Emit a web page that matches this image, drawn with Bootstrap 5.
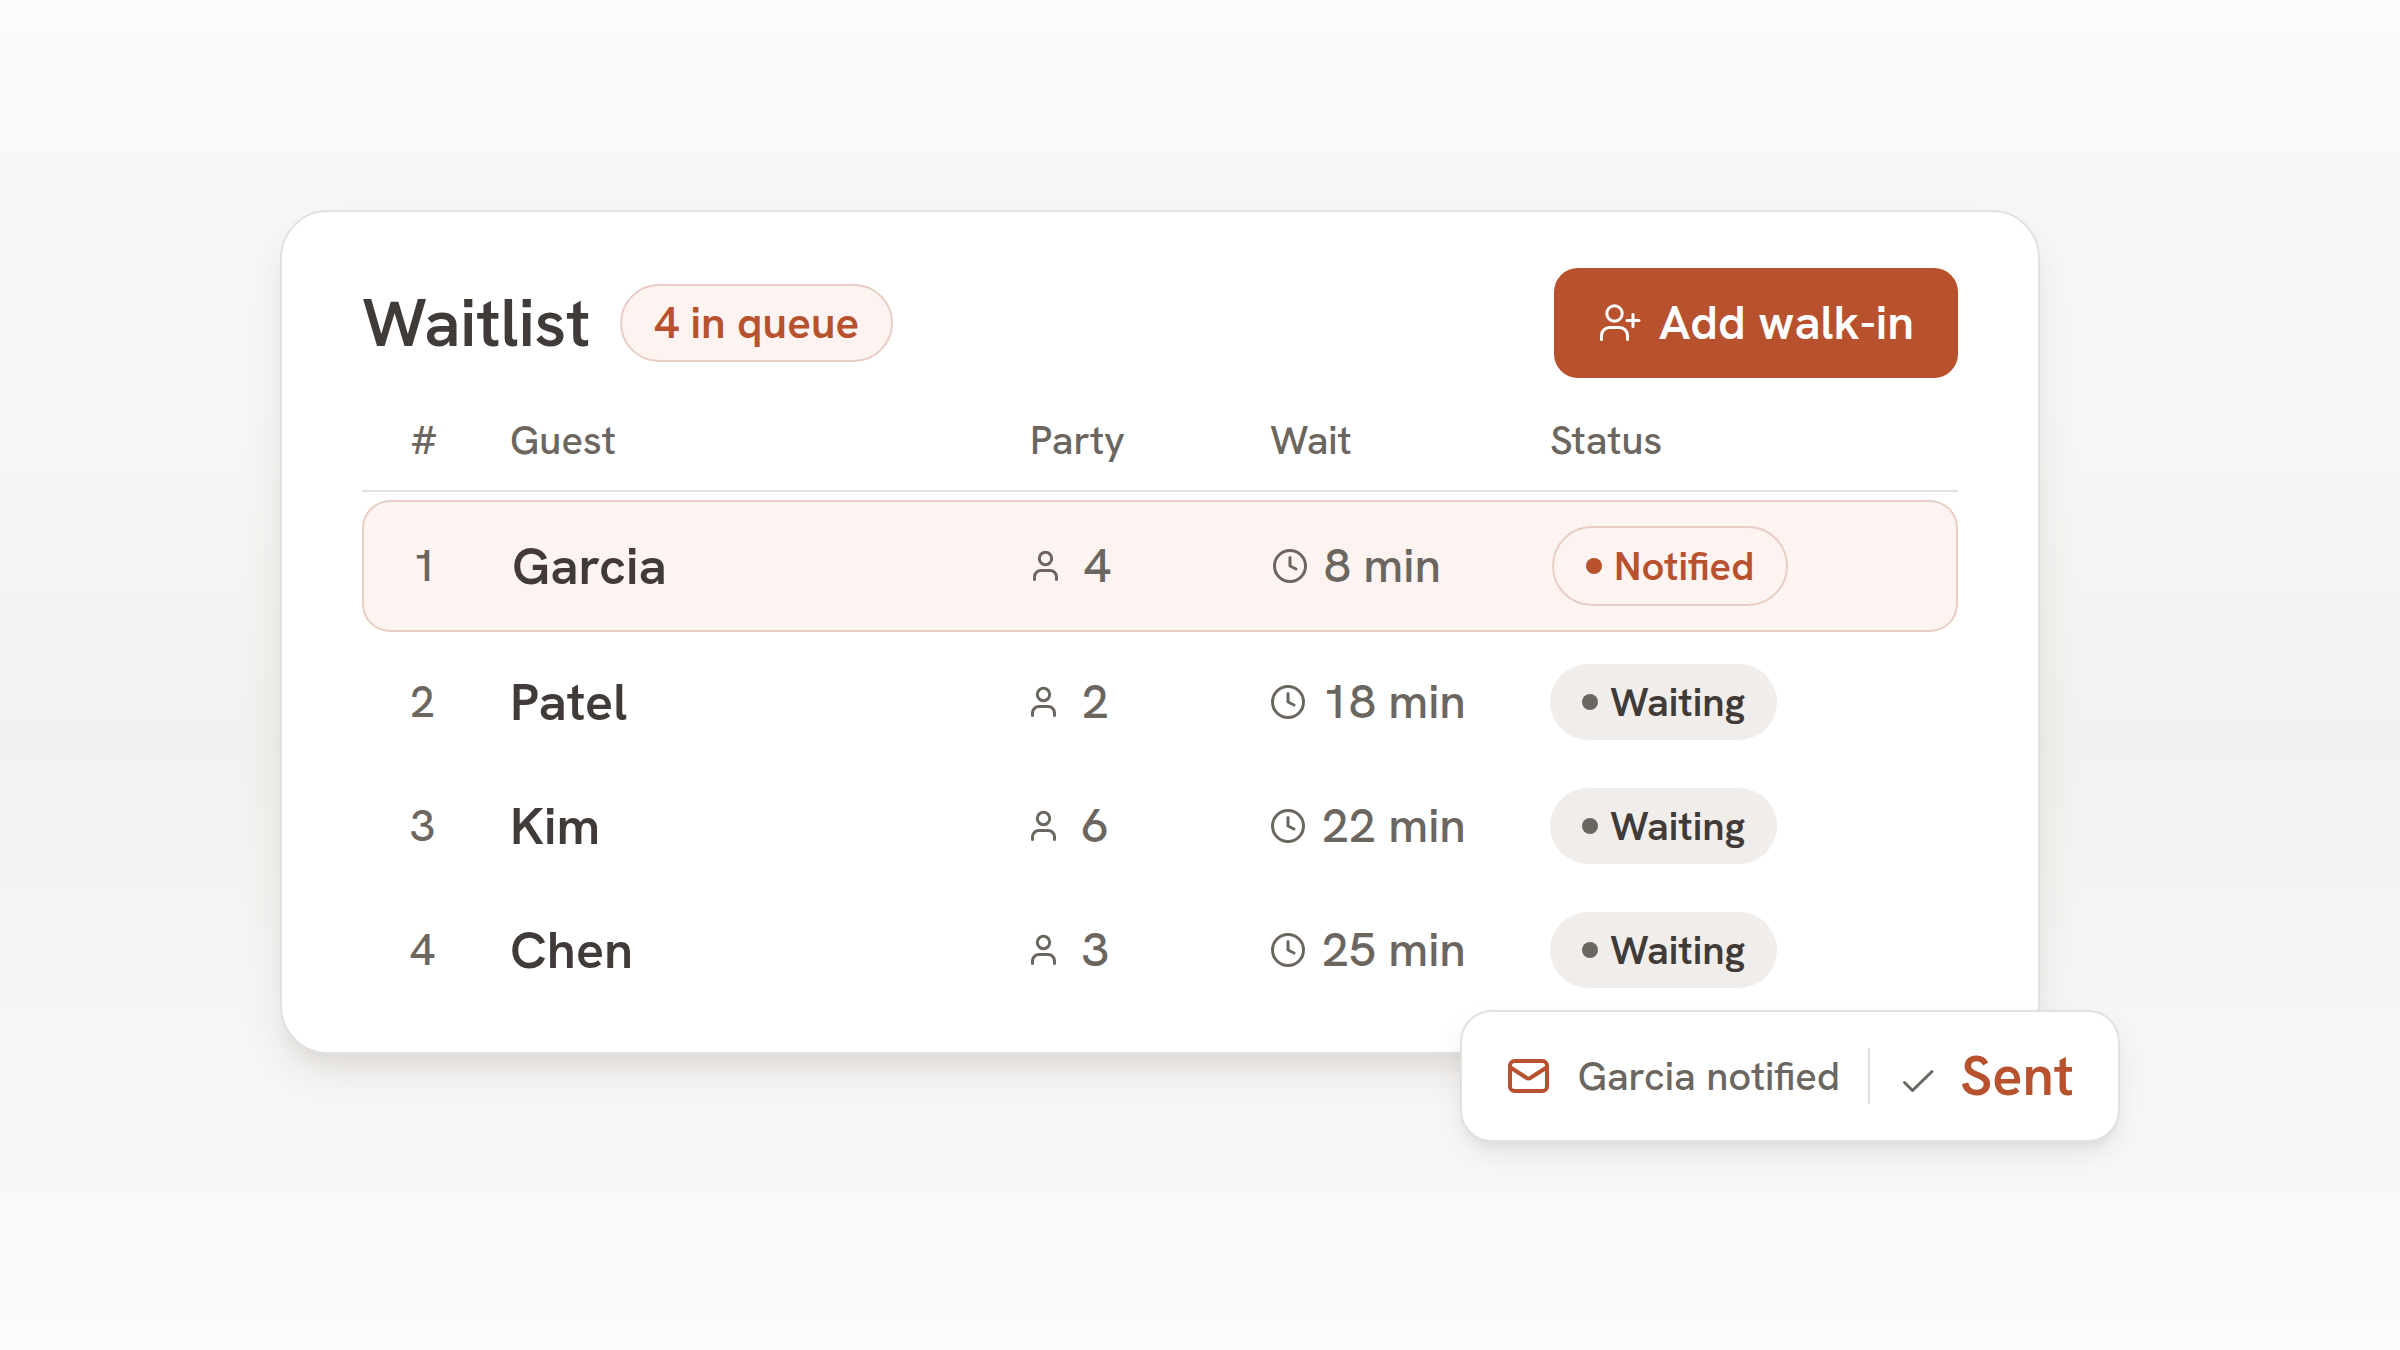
<!DOCTYPE html>
<html lang="en">
<head>
<meta charset="utf-8">
<meta name="viewport" content="width=device-width, initial-scale=1">
<title>Waitlist</title>
<link rel="stylesheet" href="https://cdn.jsdelivr.net/npm/bootstrap@5.3.0/dist/css/bootstrap.min.css">
<style>
  :root {
    --ink: #403b39;
    --muted: #6b665f;
    --brand: #b8512e;
    --brand-soft: #fdf4f2;
    --brand-line: #e8cdc4;
    --line: #e2e1df;
    --chip: #f0edea;
  }
  body {
    font-family: "Hanken Grotesk", Roboto, "Liberation Sans", sans-serif;
    color: var(--ink);
    background: linear-gradient(180deg, #fcfbf9 0%, #f8f8f8 12%, #f7f7f6 30%, #f2f1ef 55%, #f7f6f5 75%, #f8f8f8 88%, #fcfbf9 100%);
  }
  .stage { padding-top: 2px; }
  .board { max-width: 1840px; padding: 0 80px 88px 0; }
  .panel {
    border: 2px solid var(--line);
    border-radius: 48px;
    padding: 56px 80px 40px;
    box-shadow: 0 20px 40px rgba(90, 65, 50, .10), 0 16px 16px -8px rgba(70, 65, 60, .07);
  }
  .panel-title { font-size: 67px; line-height: 80px; font-weight: 600; }
  .head-gap { gap: 30px; }
  .queue-pill {
    font-size: 44px; line-height: 74px; font-weight: 600;
    padding: 0 32px;
    color: var(--brand); background: var(--brand-soft);
    border: 2px solid var(--brand-line);
  }
  .btn-walkin {
    --bs-btn-color: #fff; --bs-btn-bg: var(--brand);
    --bs-btn-hover-color: #fff; --bs-btn-hover-bg: #a34626;
    --bs-btn-active-color: #fff; --bs-btn-active-bg: #933e21;
    --bs-btn-border-width: 0;
    --bs-btn-padding-x: 44px; --bs-btn-padding-y: 23px;
    --bs-btn-font-size: 48px; --bs-btn-font-weight: 600; --bs-btn-line-height: 64px;
    --bs-btn-border-radius: 24px;
    gap: 17px;
  }
  .ico { fill: none; stroke: currentColor; stroke-width: 3; stroke-linecap: round; stroke-linejoin: round; flex: none; }
  .ico-bold { stroke-width: 4; }

  .queue { width: 100%; table-layout: fixed; border-collapse: separate; border-spacing: 0 8px; }
  .queue th { font-size: 40px; line-height: 52px; font-weight: 500; color: var(--muted); height: 106px; padding: 4px 0 0; border-bottom: 2px solid var(--line); }
  .queue td { height: 116px; padding: 8px 0 0; font-size: 48px; line-height: 64px; font-weight: 500; color: var(--muted); font-variant-numeric: tabular-nums; }
  .queue .c-num { width: 148px; padding-right: 24px; text-align: center; }
  .queue td.c-num { font-size: 44px; padding-right: 27px; }
  .queue .c-guest { width: 520px; }
  .queue .c-party { width: 240px; }
  .queue .c-wait { width: 280px; }
  .queue td.c-guest { font-size: 52px; font-weight: 600; color: var(--ink); }
  .queue .is-active td { height: 132px; padding-top: 0; padding-left: 2px; background: var(--brand-soft); border: 0 solid var(--brand-line); border-width: 2px 0; }
  .queue .is-active td:first-child { border-left-width: 2px; border-radius: 28px 0 0 28px; }
  .queue .is-active td:last-child { border-right-width: 2px; border-radius: 0 28px 28px 0; }
  .queue .pair { gap: 16px; }

  .status { display: inline-flex; align-items: center; gap: 12px; height: 76px; padding: 0 32px; border-radius: 40px; font-size: 40px; line-height: 52px; font-weight: 600; vertical-align: middle; color: var(--ink); background: var(--chip); }
  .status::before { content: ""; width: 16px; height: 16px; border-radius: 50%; background: var(--muted); }
  .status.notified { height: 80px; color: var(--brand); background: transparent; border: 2px solid var(--brand-line); }
  .status.notified::before { background: var(--brand); }

  .notice {
    right: -82px; bottom: -90px; height: 132px; gap: 28px; padding: 0 44px;
    border: 2px solid var(--line); border-radius: 32px;
    font-size: 40px; font-weight: 500; color: var(--muted);
    box-shadow: 0 14px 28px rgba(90, 65, 50, .09), 0 8px 10px -5px rgba(70, 65, 60, .09);
  }
  .notice .rule { width: 2px; height: 56px; background: var(--line); }
  .notice .sent { font-size: 56px; font-weight: 600; color: var(--brand); }
  .brand-ink { color: var(--brand); }
</style>
</head>
<body>
<svg class="d-none" aria-hidden="true">
  <symbol id="i-person" viewBox="0 0 36 32"><circle cx="13.5" cy="8.5" r="6.2"/><path d="M2.5 29.5v-2.500a6.500 6.500 0 0 1 6.500-6.500h9a6.500 6.500 0 0 1 6.500 6.500v2.500"/></symbol>
  <symbol id="i-clock" viewBox="0 0 36 36"><circle cx="18" cy="18" r="15.500"/><path d="M18 9.500V18l6 3"/></symbol>
</svg>

<main class="stage min-vh-100 d-flex align-items-center justify-content-center">
  <div class="board w-100">
    <section class="panel bg-white position-relative">
      <header class="d-flex align-items-center justify-content-between">
        <div class="head-gap d-flex align-items-center">
          <h1 class="panel-title mb-0">Waitlist</h1>
          <span class="queue-pill rounded-pill">4 in queue</span>
        </div>
        <button type="button" class="btn btn-walkin d-flex align-items-center">
          <svg class="ico" width="44" height="44" viewBox="0 0 44 44" aria-hidden="true"><circle cx="16.500" cy="12.500" r="7.700"/><path d="M3.500 38.500v-4a8 8 0 0 1 8-8h10a8 8 0 0 1 8 8v4M35 13.500v12M29 19.500h12"/></svg>
          Add walk-in
        </button>
      </header>

      <table class="queue">
        <thead>
          <tr><th scope="col" class="c-num">#</th><th scope="col" class="c-guest">Guest</th><th scope="col" class="c-party">Party</th><th scope="col" class="c-wait">Wait</th><th scope="col">Status</th></tr>
        </thead>
        <tbody>
          <tr class="is-active">
            <td class="c-num">1</td><td class="c-guest">Garcia</td>
            <td><div class="pair d-flex align-items-center"><svg class="ico" width="36" height="32" aria-hidden="true"><use href="#i-person"/></svg>4</div></td>
            <td><div class="pair d-flex align-items-center"><svg class="ico" width="36" height="36" aria-hidden="true"><use href="#i-clock"/></svg>8 min</div></td>
            <td><span class="status notified">Notified</span></td>
          </tr>
          <tr>
            <td class="c-num">2</td><td class="c-guest">Patel</td>
            <td><div class="pair d-flex align-items-center"><svg class="ico" width="36" height="32" aria-hidden="true"><use href="#i-person"/></svg>2</div></td>
            <td><div class="pair d-flex align-items-center"><svg class="ico" width="36" height="36" aria-hidden="true"><use href="#i-clock"/></svg>18 min</div></td>
            <td><span class="status">Waiting</span></td>
          </tr>
          <tr>
            <td class="c-num">3</td><td class="c-guest">Kim</td>
            <td><div class="pair d-flex align-items-center"><svg class="ico" width="36" height="32" aria-hidden="true"><use href="#i-person"/></svg>6</div></td>
            <td><div class="pair d-flex align-items-center"><svg class="ico" width="36" height="36" aria-hidden="true"><use href="#i-clock"/></svg>22 min</div></td>
            <td><span class="status">Waiting</span></td>
          </tr>
          <tr>
            <td class="c-num">4</td><td class="c-guest">Chen</td>
            <td><div class="pair d-flex align-items-center"><svg class="ico" width="36" height="32" aria-hidden="true"><use href="#i-person"/></svg>3</div></td>
            <td><div class="pair d-flex align-items-center"><svg class="ico" width="36" height="36" aria-hidden="true"><use href="#i-clock"/></svg>25 min</div></td>
            <td><span class="status">Waiting</span></td>
          </tr>
        </tbody>
      </table>

      <div class="notice position-absolute bg-white d-flex align-items-center text-nowrap" role="status">
        <svg class="ico ico-bold brand-ink" width="44" height="44" viewBox="0 0 44 44" aria-hidden="true"><rect x="4" y="7" width="37" height="30" rx="4.500"/><path d="M4.500 13.500L20 23.500a4 4 0 0 0 5 0L40.500 13.500"/></svg>
        <span>Garcia notified</span>
        <span class="rule"></span>
        <svg class="ico" width="34" height="36" viewBox="0 0 34 36" overflow="visible" aria-hidden="true"><path d="M6.500 24.500l8 8L34 13.500"/></svg>
        <span class="sent">Sent</span>
      </div>
    </section>
  </div>
</main>
<script src="https://cdn.jsdelivr.net/npm/bootstrap@5.3.0/dist/js/bootstrap.bundle.min.js"></script>
</body>
</html>
